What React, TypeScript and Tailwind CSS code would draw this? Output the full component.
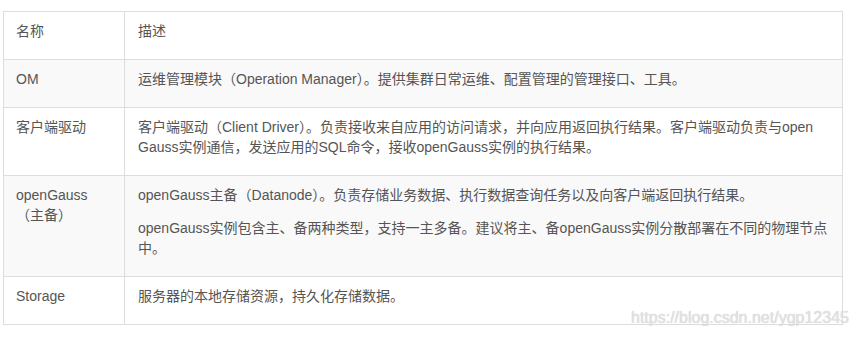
import React from 'react';

type Row = { name: React.ReactNode; desc: React.ReactNode[]; shaded?: boolean };

const rows: Row[] = [
  { name: '名称', desc: ['描述'] },
  { name: 'OM', desc: ['运维管理模块（Operation Manager）。提供集群日常运维、配置管理的管理接口、工具。'], shaded: true },
  {
    name: '客户端驱动',
    desc: [
      <>
        客户端驱动（Client Driver）。负责接收来自应用的访问请求，并向应用返回执行结果。客户端驱动负责与open
        <br />
        Gauss实例通信，发送应用的SQL命令，接收openGauss实例的执行结果。
      </>,
    ],
  },
  {
    name: 'openGauss（主备）',
    desc: [
      'openGauss主备（Datanode）。负责存储业务数据、执行数据查询任务以及向客户端返回执行结果。',
      'openGauss实例包含主、备两种类型，支持一主多备。建议将主、备openGauss实例分散部署在不同的物理节点中。',
    ],
    shaded: true,
  },
  { name: 'Storage', desc: ['服务器的本地存储资源，持久化存储数据。'] },
];

export default function App() {
  return (
    <div
      className="relative w-[856px] h-[337px] bg-white overflow-hidden text-[14px] leading-[20px] text-[#555]"
      style={{ fontFamily: '"Liberation Sans", "Noto Sans CJK SC", sans-serif' }}
    >
      <div className="ml-[3px] mt-[11px] w-[840px] border border-[#dddddd]">
        {rows.map((row, i) => (
          <div
            key={i}
            className={`grid grid-cols-[121px_1fr] ${i > 0 ? 'border-t border-[#dddddd]' : ''} ${row.shaded ? 'bg-[#f9f9f9]' : 'bg-white'}`}
          >
            <div className="border-r border-[#dddddd] pl-3 pr-3 pt-[9px] pb-[18px]">{row.name}</div>
            <div className="pl-[13px] pr-3 pt-[9px] pb-[18px] flex flex-col gap-[13px]">
              {row.desc.map((d, j) => (
                <p key={j}>{d}</p>
              ))}
            </div>
          </div>
        ))}
      </div>

      {/* watermark */}
      <div className="absolute left-[631px] top-[308px] text-[16px] leading-[20px] text-[#e2e2e2] whitespace-nowrap [text-shadow:0_0_1px_#c8c8c8]">
        https://blog.csdn.net/ygp12345
      </div>
    </div>
  );
}
